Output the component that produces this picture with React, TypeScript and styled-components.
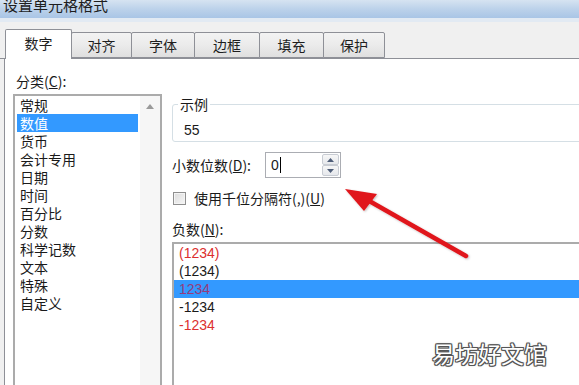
import * as React from 'react';
import styled, { createGlobalStyle } from 'styled-components';

const GlobalStyle = createGlobalStyle`
  html, body {
    margin: 0;
    padding: 0;
    background: #f0f0f0;
  }
  body {
    font-family: "Liberation Sans", "Noto Sans CJK SC", sans-serif;
    color: #1a1a1a;
  }
`;

const tabs = [
  { name: '数字', width: 67 },
  { name: '对齐', width: 61 },
  { name: '字体', width: 64 },
  { name: '边框', width: 66 },
  { name: '填充', width: 65 },
  { name: '保护', width: 62 },
];

const categories = ['常规', '数值', '货币', '会计专用', '日期', '时间', '百分比', '分数', '科学记数', '文本', '特殊', '自定义'];

const negatives = [
  { text: '(1234)', red: true },
  { text: '(1234)', red: false },
  { text: '1234', red: true, selected: true },
  { text: '-1234', red: false },
  { text: '-1234', red: true },
];

export default function App() {
  return (
    <Window>
      <GlobalStyle />
      <TitleBar>
        <TitleText>设置单元格格式</TitleText>
      </TitleBar>
      <TabStrip>
        {tabs.map((t, i) => (
          <Tab key={t.name} $active={i === 0} $w={t.width}>
            {t.name}
          </Tab>
        ))}
      </TabStrip>
      <Panel>
        <LeftCol>
          <Label $indent={3}>
            分类(<u>C</u>):
          </Label>
          <ListBox>
            <ItemList>
              {categories.map((c, i) => (
                <CatItem key={c} $selected={i === 1}>
                  {c}
                </CatItem>
              ))}
            </ItemList>
            <ScrollBar>
              <svg width="8" height="5" viewBox="0 0 8 5">
                <path d="M0 5 L4 0 L8 5 Z" fill="#9a9a9a" />
              </svg>
            </ScrollBar>
          </ListBox>
        </LeftCol>
        <RightCol>
          <SampleGroup>
            <Legend>示例</Legend>
            <SampleValue>55</SampleValue>
          </SampleGroup>
          <SpinRow>
            <FieldLabel>
              小数位数(<u>D</u>):
            </FieldLabel>
            <Spinner>
              <SpinValue>
                0<Caret />
              </SpinValue>
              <SpinButtons>
                <SpinButton>
                  <svg width="7" height="4" viewBox="0 0 7 4">
                    <path d="M0 4 L3.5 0 L7 4 Z" fill="#4f5e79" />
                  </svg>
                </SpinButton>
                <SpinButton>
                  <svg width="7" height="4" viewBox="0 0 7 4">
                    <path d="M0 0 L3.5 4 L7 0 Z" fill="#4f5e79" />
                  </svg>
                </SpinButton>
              </SpinButtons>
            </Spinner>
          </SpinRow>
          <CheckRow>
            <CheckBox />
            <CheckText>
              使用千位分隔符(,)(<u>U</u>)
            </CheckText>
          </CheckRow>
          <NegLabel>
            负数(<u>N</u>):
          </NegLabel>
          <NegList>
            {negatives.map((n, i) => (
              <NegItem key={i} $red={n.red} $selected={!!n.selected}>
                {n.text}
              </NegItem>
            ))}
          </NegList>
        </RightCol>
      </Panel>

      <ArrowLayer width="579" height="385" viewBox="0 0 579 385">
        <defs>
          <filter id="arrowShadow" x="-20%" y="-20%" width="140%" height="140%">
            <feDropShadow dx="1" dy="1" stdDeviation="1.2" floodColor="#000" floodOpacity="0.25" />
          </filter>
        </defs>
        <g filter="url(#arrowShadow)">
          <path d="M466 256 L364 198" stroke="#e0141a" strokeWidth="4.5" strokeLinecap="round" />
          <path d="M345 189 L377 194 L364 211 Z" fill="#e0141a" />
        </g>
      </ArrowLayer>

      <Watermark>易坊好文馆</Watermark>
    </Window>
  );
}

const Window = styled.div`
  position: relative;
  width: 579px;
  height: 385px;
  overflow: hidden;
  display: flex;
  flex-direction: column;
  background: #f0f0f0;
`;

const TitleBar = styled.div`
  height: 22px;
  display: flex;
  align-items: flex-end;
  padding: 0 0 6px 3px;
  box-sizing: border-box;
  overflow: hidden;
  background: linear-gradient(to bottom, #d6e3f1 0%, #bcd2ea 50%, #a9c5e6 100%);
  border-bottom: 4px solid #e2eaf3;
`;

const TitleText = styled.div`
  font-family: "Noto Sans CJK SC", sans-serif;
  font-size: 15px;
  line-height: 15px;
  color: #1e1e1e;
  white-space: nowrap;
`;

const TabStrip = styled.div`
  display: flex;
  align-items: flex-end;
  height: 37px;
  box-sizing: border-box;
  padding-left: 5px;
  border-bottom: 1px solid #8e9097;
`;

const Tab = styled.div<{ $active: boolean; $w: number }>`
  position: relative;
  z-index: ${(p) => (p.$active ? 2 : 1)};
  width: ${(p) => p.$w}px;
  height: ${(p) => (p.$active ? 30 : 26)}px;
  margin-bottom: ${(p) => (p.$active ? -1 : 0)}px;
  margin-left: ${(p) => (p.$active ? 0 : -1)}px;
  box-sizing: border-box;
  padding-top: ${(p) => (p.$active ? 5 : 4)}px;
  text-align: center;
  font-family: "Noto Sans CJK SC", sans-serif;
  font-size: 14px;
  line-height: 16px;
  color: #1e1e1e;
  border: 1px solid #8e9097;
  border-bottom: ${(p) => (p.$active ? 'none' : '1px solid #8e9097')};
  border-radius: 2px 2px 0 0;
  background: ${(p) =>
    p.$active ? '#ffffff' : 'linear-gradient(to bottom, #f3f3f3 0%, #ebebeb 50%, #dfdfdf 100%)'};
`;

const Panel = styled.div`
  flex: 1;
  display: flex;
  gap: 10px;
  margin-left: 4px;
  padding: 13px 0 0 8px;
  background: #ffffff;
  border-left: 1px solid #8e9097;
  min-height: 0;
`;

const LeftCol = styled.div`
  width: 149px;
  flex: none;
  display: flex;
  flex-direction: column;
`;

const Label = styled.div<{ $indent?: number }>`
  font-family: "Noto Sans CJK SC", sans-serif;
  font-size: 14px;
  line-height: 18px;
  height: 18px;
  margin-left: ${(p) => p.$indent ?? 0}px;
  white-space: nowrap;
`;

const ListBox = styled.div`
  margin-top: 4px;
  height: 300px;
  flex: none;
  display: flex;
  border: 2px solid #ababab;
  border-bottom: none;
  background: #ffffff;
`;

const ItemList = styled.div`
  flex: 1;
  padding: 0 2px;
`;

const CatItem = styled.div<{ $selected: boolean }>`
  height: 18px;
  line-height: 18px;
  padding-left: 3px;
  font-family: "Noto Sans CJK SC", sans-serif;
  font-size: 14px;
  color: ${(p) => (p.$selected ? '#ffffff' : '#1a1a1a')};
  background: ${(p) => (p.$selected ? '#3399ff' : 'transparent')};
`;

const ScrollBar = styled.div`
  width: 20px;
  flex: none;
  display: flex;
  justify-content: center;
  align-items: flex-start;
  padding-top: 8px;
  box-sizing: border-box;
  background: #f6f6f6;
`;

const RightCol = styled.div`
  width: 430px;
  flex: none;
  display: flex;
  flex-direction: column;
`;

const SampleGroup = styled.fieldset`
  margin: 24px 0 0 0;
  padding: 0 0 0 5px;
  height: 49px;
  box-sizing: border-box;
  border: 1px solid #d5dfe5;
  border-radius: 3px;
  min-inline-size: 0;
`;

const Legend = styled.legend`
  padding: 0 2px;
  font-family: "Noto Sans CJK SC", sans-serif;
  font-size: 14px;
  line-height: 16px;
`;

const SampleValue = styled.div`
  margin: 9px 0 0 6px;
  font-size: 14px;
  line-height: 18px;
`;

const SpinRow = styled.div`
  margin-top: 10px;
  height: 26px;
  display: flex;
  align-items: center;
`;

const FieldLabel = styled.div`
  width: 93px;
  font-family: "Noto Sans CJK SC", sans-serif;
  font-size: 14px;
  line-height: 18px;
  white-space: nowrap;
`;

const Spinner = styled.div`
  width: 76px;
  height: 26px;
  box-sizing: border-box;
  display: flex;
  border: 1px solid #abadb3;
  background: #ffffff;
`;

const SpinValue = styled.div`
  flex: 1;
  display: flex;
  align-items: center;
  padding-left: 5px;
  font-size: 14px;
`;

const Caret = styled.span`
  display: inline-block;
  width: 1px;
  height: 16px;
  margin-left: 1px;
  background: #000;
`;

const SpinButtons = styled.div`
  width: 17px;
  flex: none;
  display: flex;
  flex-direction: column;
  padding: 1px 1px 1px 0;
`;

const SpinButton = styled.div`
  flex: 1;
  display: flex;
  align-items: center;
  justify-content: center;
  border: 1px solid #c8ccd3;
  border-radius: 2px;
  background: linear-gradient(to bottom, #f7f7f7, #e6e8ec);
`;

const CheckRow = styled.div`
  margin-top: 12px;
  height: 16px;
  display: flex;
  align-items: center;
  gap: 8px;
`;

const CheckBox = styled.div`
  width: 13px;
  height: 13px;
  margin-left: 1px;
  box-sizing: border-box;
  border: 1px solid #8f8f8f;
  background: linear-gradient(135deg, #dcdcdc, #f6f6f6);
  box-shadow: inset 0 0 0 1px #f4f4f4;
`;

const CheckText = styled.div`
  font-family: "Noto Sans CJK SC", sans-serif;
  font-size: 14px;
  line-height: 16px;
  white-space: nowrap;
`;

const NegLabel = styled(Label)`
  margin-top: 14px;
`;

const NegList = styled.div`
  margin-top: 4px;
  height: 150px;
  border: 2px solid #ababab;
  border-right: none;
  border-bottom: none;
  background: #ffffff;
`;

const NegItem = styled.div<{ $red: boolean; $selected: boolean }>`
  height: 18px;
  line-height: 18px;
  padding-left: 5px;
  font-size: 14px;
  color: ${(p) => (p.$selected ? '#963c7c' : p.$red ? '#dc2f2f' : '#1a1a1a')};
  background: ${(p) => (p.$selected ? '#3399ff' : 'transparent')};
`;

const ArrowLayer = styled.svg`
  position: absolute;
  left: 0;
  top: 0;
  pointer-events: none;
`;

const Watermark = styled.div`
  position: absolute;
  left: 432px;
  top: 340px;
  font-family: "Noto Sans CJK SC", sans-serif;
  font-size: 23px;
  line-height: 26px;
  color: #ffffff;
  white-space: nowrap;
  text-shadow: 1px 0 0 #555, -1px 0 0 #555, 0 1px 0 #555, 0 -1px 0 #555, 1px 1px 0 #555, -1px -1px 0 #555,
    1px -1px 0 #555, -1px 1px 0 #555, 0 0 3px rgba(0, 0, 0, 0.35);
`;
